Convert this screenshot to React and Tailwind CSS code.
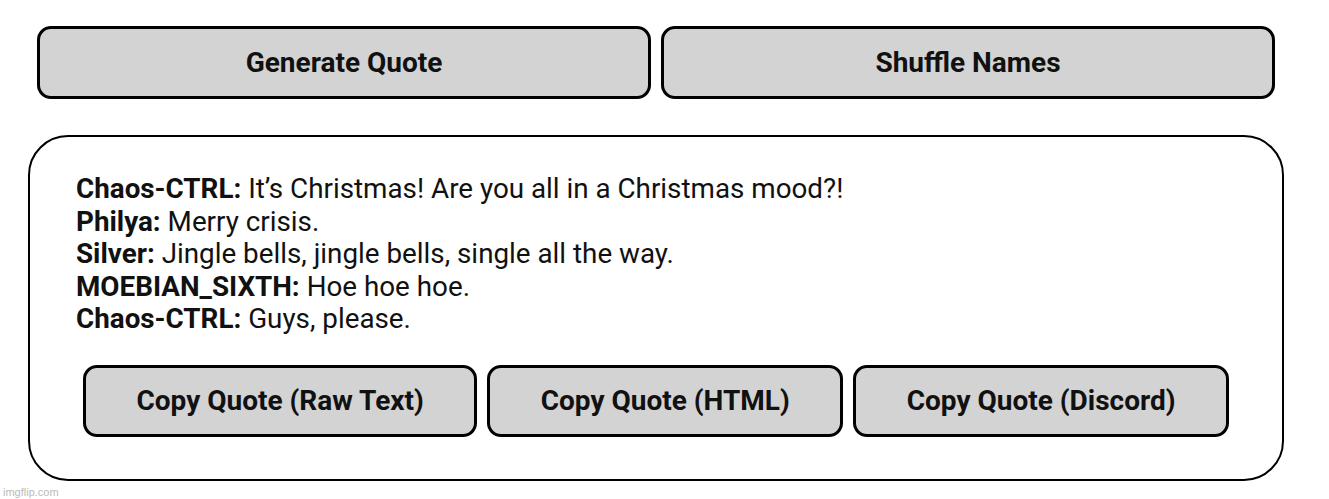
export default function App() {
    const lines = [
        ["Chaos-CTRL:", "It’s Christmas! Are you all in a Christmas mood?!"],
        ["Philya:", "Merry crisis."],
        ["Silver:", "Jingle bells, jingle bells, single all the way."],
        ["MOEBIAN_SIXTH:", "Hoe hoe hoe."],
        ["Chaos-CTRL:", "Guys, please."],
    ];

    const copyButtons = ["Copy Quote (Raw Text)", "Copy Quote (HTML)", "Copy Quote (Discord)"];

    return (
        <div className="relative min-h-screen bg-white font-['Roboto',sans-serif] text-[#111]">
            {/* Top actions */}
            <div className="flex gap-[10px] pl-[37px] pr-[54px] pt-[26px]">
                <button className="flex-1 h-[73px] rounded-[14px] border-[3px] border-black bg-[#d3d3d3] text-[28px] font-bold">
                    Generate Quote
                </button>
                <button className="flex-1 h-[73px] rounded-[14px] border-[3px] border-black bg-[#d3d3d3] text-[28px] font-bold">
                    Shuffle Names
                </button>
            </div>

            {/* Quote card */}
            <div className="ml-[28px] mr-[45px] mt-[36px] h-[346px] rounded-[40px] border-2 border-black pt-[36px]">
                <div className="pl-[46px] text-[27.8px] leading-[32.5px]">
                    {lines.map(([name, text], i) => (
                        <div key={i}>
                            <span className="font-bold">{name}</span> {text}
                        </div>
                    ))}
                </div>

                <div className="flex gap-[10px] px-[53px] mt-[29px]">
                    {copyButtons.map((label) => (
                        <button
                            key={label}
                            className="flex-auto h-[72px] rounded-[14px] border-[3px] border-black bg-[#d3d3d3] px-4 text-[28px] font-bold"
                        >
                            {label}
                        </button>
                    ))}
                </div>
            </div>

            {/* watermark */}
            <div className="absolute left-[3px] top-[484px] text-[11px] text-[#bbb] font-['Liberation_Sans',sans-serif]">
                imgflip.com
            </div>
        </div>
    );
}
